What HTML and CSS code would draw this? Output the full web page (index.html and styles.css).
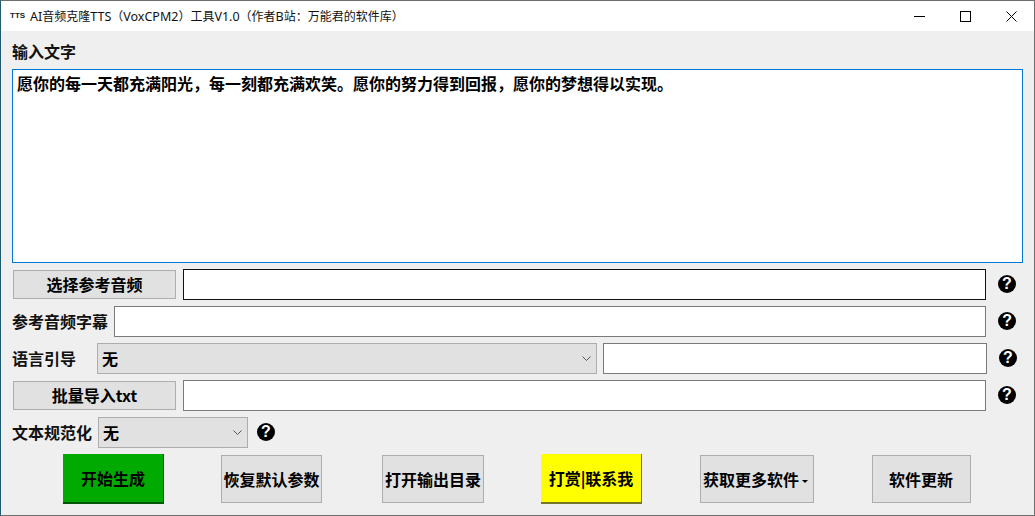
FILE: index.html
```html
<!DOCTYPE html>
<html lang="zh-CN">
<head>
<meta charset="utf-8">
<title>AI音频克隆TTS</title>
<link rel="stylesheet" href="styles.css">
</head>
<body>
<div class="window">
  <header class="titlebar">
    <span class="app-icon">TTS</span>
    <span class="title"><span class="lat">AI</span>音频克隆<span class="lat">TTS</span>（<span class="lat">VoxCPM2</span>）工具<span class="lat">V1.0</span>（作者<span class="lat">B</span>站：万能君的软件库）</span>
    <div class="controls">
      <span class="ctl"><svg width="11" height="11" viewBox="0 0 11 11"><path d="M0 5.5H11" stroke="#000" fill="none"/></svg></span>
      <span class="ctl"><svg width="11" height="11" viewBox="0 0 11 11"><rect x=".5" y=".5" width="10" height="10" stroke="#000" fill="none"/></svg></span>
      <span class="ctl"><svg width="11" height="11" viewBox="0 0 11 11"><path d="M.5 .5L10.5 10.5M10.5 .5L.5 10.5" stroke="#000" fill="none"/></svg></span>
    </div>
  </header>
  <main class="main">
    <div class="heading">输入文字</div>
    <textarea class="textbox" spellcheck="false">愿你的每一天都充满阳光，每一刻都充满欢笑。愿你的努力得到回报，愿你的梦想得以实现。</textarea>
    <div class="rows">
      <div class="row">
        <button class="btn file-btn">选择参考音频</button>
        <input class="field field-dark file-field">
        <span class="help">?</span>
      </div>
      <div class="row">
        <span class="label">参考音频字幕</span>
        <input class="field caption-field">
        <span class="help">?</span>
      </div>
      <div class="row">
        <span class="label lang-label">语言引导</span>
        <div class="select lang-select"><span>无</span>
          <svg class="chev" width="9" height="5" viewBox="0 0 9 5"><path d="M.5 .5L4.5 4.5L8.5 .5" stroke="#555" fill="none"/></svg>
        </div>
        <input class="field lang-field">
        <span class="help help-lang">?</span>
      </div>
      <div class="row">
        <button class="btn file-btn">批量导入txt</button>
        <input class="field file-field">
        <span class="help">?</span>
      </div>
      <div class="row">
        <span class="label norm-label">文本规范化</span>
        <div class="select norm-select"><span>无</span>
          <svg class="chev" width="9" height="5" viewBox="0 0 9 5"><path d="M.5 .5L4.5 4.5L8.5 .5" stroke="#555" fill="none"/></svg>
        </div>
        <span class="help help-norm">?</span>
      </div>
    </div>
    <div class="actions">
      <button class="act act-green">开始生成</button>
      <button class="act act-reset">恢复默认参数</button>
      <button class="act act-open">打开输出目录</button>
      <button class="act act-yellow">打赏|联系我</button>
      <button class="act act-more">获取更多软件<i class="caret"></i></button>
      <button class="act act-update">软件更新</button>
    </div>
  </main>
</div>
</body>
</html>
```
FILE: styles.css
```css
* { box-sizing: border-box; }
html, body { margin: 0; padding: 0; }
body {
  width: 1035px;
  height: 516px;
  overflow: hidden;
  font-family: "Noto Sans CJK SC", "Liberation Sans", sans-serif;
  color: #000;
}
.window {
  width: 1035px;
  height: 516px;
  background: #efefef;
  border: 1px solid #6e6e6e;
  border-left-color: #1f5a70;
  display: flex;
  flex-direction: column;
}
.titlebar {
  height: 30px;
  flex: none;
  background: #fff;
  display: flex;
  align-items: center;
  padding-left: 9px;
}
.app-icon {
  font: bold 8px/1 "Liberation Sans", sans-serif;
  width: 20px;
  color: #222;
}
.title {
  font-size: 12px;
  line-height: 16px;
  white-space: nowrap;
  color: #111;
}
.lat { font-family: "Noto Sans", sans-serif; font-size: 12.5px; }
.controls { margin-left: auto; display: flex; }
.ctl {
  width: 46px;
  height: 30px;
  display: flex;
  align-items: center;
  justify-content: center;
}
.main { flex: 1; padding: 10px 0 0 11px; min-height: 0; }
.heading {
  font-size: 16px;
  font-weight: 700;
  line-height: 20px;
  height: 28px;
  color: #111;
}
.textbox {
  display: block;
  width: 1011px;
  height: 194px;
  border: 1px solid #0078d7;
  background: #fff;
  padding: 2px 4px;
  margin: 0;
  resize: none;
  outline: none;
  overflow: hidden;
  font: 700 16px/22px "Noto Sans CJK SC", sans-serif;
  color: #000;
}
.rows {
  margin-top: 6px;
  display: flex;
  flex-direction: column;
  gap: 6px;
}
.row { display: flex; align-items: center; height: 31px; }
.btn {
  width: 163px;
  height: 29px;
  margin: 0 7px 0 1px;
  padding: 0 0 2px;
  background: #e1e1e1;
  border: 1px solid #adadad;
  font: 700 16px/1 "Noto Sans CJK SC", sans-serif;
  color: #000;
}
.field {
  height: 31px;
  margin: 0;
  background: #fff;
  border: 1px solid #7a7a7a;
  outline: none;
}
.field-dark { border: 1px solid #111; }
.file-field { width: 803px; }
.label {
  font-size: 16px;
  font-weight: 700;
  line-height: 20px;
  white-space: nowrap;
  color: #111;
  margin-top: -2px;
}
.caption-field { width: 872px; margin-left: 6px; }
.lang-label { width: 85px; }
.select {
  height: 31px;
  display: flex;
  align-items: center;
  justify-content: space-between;
  background: #e1e1e1;
  border: 1px solid #adadad;
  padding: 0 5px 2px 4px;
  font-size: 16px;
  font-weight: 700;
}
.lang-select { width: 500px; }
.lang-field { width: 384px; margin-left: 6px; }
.norm-label { width: 86px; }
.norm-select { width: 150px; }
.chev { margin-top: 2px; }
.help {
  width: 18px;
  height: 18px;
  border-radius: 50%;
  background: #000;
  color: #fff;
  font: 700 16px/18px "Liberation Sans", sans-serif;
  text-align: center;
  margin-left: 12px;
  margin-top: -2px;
  flex: none;
}
.help-lang { margin-left: 12px; }
.help-norm { margin-left: 9px; }
.actions { display: flex; align-items: center; height: 50px; margin-top: 6px; }
.act {
  height: 48px;
  padding: 0 0 1px;
  background: #e1e1e1;
  border: 1px solid #adadad;
  font: 700 16px/1 "Noto Sans CJK SC", sans-serif;
  color: #000;
  white-space: nowrap;
  flex: none;
}
.act-green, .act-yellow {
  height: 50px;
  width: 101px;
  border: 0;
  border-right: 1px solid #555;
  border-bottom: 2px solid #555;
}
.act-green { background: #00aa00; margin-left: 51px; border-color: #005500; }
.act-yellow { background: #ffff00; margin-left: 57px; border-color: #77772a; }
.act-reset { width: 101px; margin-left: 57px; }
.act-open { width: 102px; margin-left: 60px; }
.act-more { width: 114px; margin-left: 58px; padding-right: 3px; }
.act-update { width: 99px; margin-left: 58px; padding-right: 1px; }
.caret {
  display: inline-block;
  width: 0;
  height: 0;
  border: 3px solid transparent;
  border-top: 3px solid #000;
  border-bottom: 0;
  margin-left: 3px;
  vertical-align: middle;
}
```
